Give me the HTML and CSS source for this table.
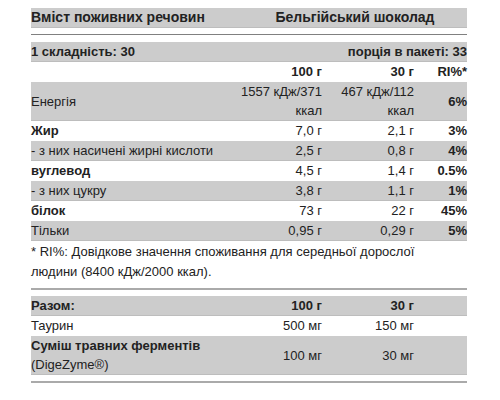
FILE: index.html
```html
<!DOCTYPE html>
<html lang="uk">
<head>
    <meta charset="UTF-8">
    <title>Вміст поживних речовин</title>
    <link rel="stylesheet" href="styles.css">
</head>
<body>
    <div id="nutrition">
        <table class="facts title">
            <colgroup>
                <col class="c-title"><col>
            </colgroup>
            <tr class="shade">
                <th class="left">Вміст поживних речовин</th>
                <th class="center">Бельгійський шоколад</th>
            </tr>
        </table>

        <div class="rule thin"></div>

        <table class="facts">
            <colgroup>
                <col class="c-name"><col class="c-val"><col class="c-val2"><col class="c-ri">
            </colgroup>
            <tr class="shade">
                <th class="left">1 складність: 30</th>
                <th colspan="3">порція в пакеті: 33</th>
            </tr>
            <tr>
                <th></th>
                <th>100 г</th>
                <th>30 г</th>
                <th>RI%*</th>
            </tr>
            <tr class="shade">
                <td class="name">Енергія</td>
                <td>1557 кДж/371 ккал</td>
                <td>467 кДж/112 ккал</td>
                <td class="ri">6%</td>
            </tr>
            <tr>
                <td class="name bold">Жир</td>
                <td>7,0 г</td>
                <td>2,1 г</td>
                <td class="ri">3%</td>
            </tr>
            <tr class="shade">
                <td class="name">- з них насичені жирні кислоти</td>
                <td>2,5 г</td>
                <td>0,8 г</td>
                <td class="ri">4%</td>
            </tr>
            <tr>
                <td class="name bold">вуглевод</td>
                <td>4,5 г</td>
                <td>1,4 г</td>
                <td class="ri">0.5%</td>
            </tr>
            <tr class="shade">
                <td class="name">- з них цукру</td>
                <td>3,8 г</td>
                <td>1,1 г</td>
                <td class="ri">1%</td>
            </tr>
            <tr>
                <td class="name bold">білок</td>
                <td>73 г</td>
                <td>22 г</td>
                <td class="ri">45%</td>
            </tr>
            <tr class="shade">
                <td class="name">Тільки</td>
                <td>0,95 г</td>
                <td>0,29 г</td>
                <td class="ri">5%</td>
            </tr>
        </table>

        <p class="note">* RI%: Довідкове значення споживання для середньої дорослої людини (8400 кДж/2000 ккал).</p>

        <div class="rule thick"></div>

        <table class="facts">
            <colgroup>
                <col class="c-name"><col class="c-val"><col class="c-val2"><col class="c-ri">
            </colgroup>
            <tr class="shade">
                <th class="left">Разом:</th>
                <th>100 г</th>
                <th>30 г</th>
                <th></th>
            </tr>
            <tr>
                <td class="name">Таурин</td>
                <td>500 мг</td>
                <td>150 мг</td>
                <td></td>
            </tr>
            <tr class="shade">
                <td class="name"><b>Суміш травних ферментів</b><br>(DigeZyme®)</td>
                <td>100 мг</td>
                <td>30 мг</td>
                <td></td>
            </tr>
        </table>

        <div class="rule thick"></div>
    </div>
</body>
</html>
```

FILE: styles.css
```css
body {
    font-family: "Liberation Sans", Arial, sans-serif;
    font-size: 13px;
    color: #222;
    margin: 0;
    background-color: #fff;
}
#nutrition {
    width: 436px;
    margin: 8px 0 0 31px;
}
.facts {
    width: 100%;
    border-collapse: collapse;
    table-layout: fixed;
}
.c-title { width: 212px; }
.c-name { width: 199px; }
.c-val { width: 92px; }
.c-val2 { width: 92px; }
.c-ri { width: 53px; }
.facts th,
.facts td {
    padding: 0;
    line-height: 19px;
    border-bottom: 1px solid #fff;
    text-align: right;
    vertical-align: middle;
}
.facts th {
    font-weight: bold;
}
.title th {
    font-size: 14px;
}
.facts .left,
.facts .name {
    text-align: left;
}
.facts .center {
    text-align: center;
}
.facts .bold,
.facts .ri {
    font-weight: bold;
}
.shade th,
.shade td {
    background-color: #cccccc;
    border-bottom: 1px solid #bdbdbd;
}
.rule {
    background-color: #aaa;
}
.rule.thin {
    height: 1px;
    background-color: #808080;
    margin: 6px 0 7px;
}
.rule.thick {
    height: 2px;
    margin: 6px 0 6px;
}
.note {
    margin: 0;
    padding: 1px 20px 0 0;
    line-height: 20px;
    color: #222;
}
```
